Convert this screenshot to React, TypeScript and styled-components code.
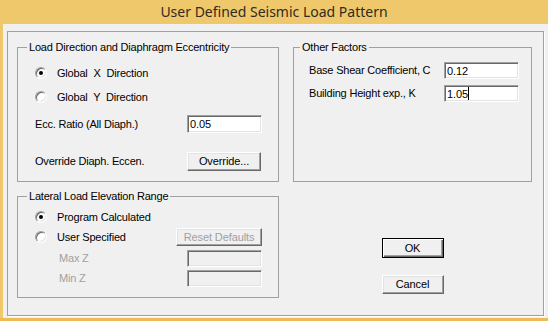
import React from "react";
import styled, { createGlobalStyle } from "styled-components";

const Global = createGlobalStyle`
  html, body { margin: 0; padding: 0; background: #f0f0f0; }
  body { font-family: "Liberation Sans", Arial, sans-serif; }
`;

const Window = styled.div`
  width: 548px;
  height: 321px;
  box-sizing: border-box;
  background: #efc86b;
  display: flex;
  flex-direction: column;
  border-bottom: 3px solid #ecbd55;
`;

const TitleBar = styled.div`
  height: 24px;
  flex: none;
  display: flex;
  align-items: center;
  justify-content: center;
  font-family: "Segoe UI", "Noto Sans", "Open Sans", sans-serif;
  font-size: 14px;
  color: #2f2b22;
  padding-bottom: 1px;
  box-sizing: border-box;
`;

const ClientWrap = styled.div`
  flex: 1;
  display: flex;
  padding-left: 3px;
  min-height: 0;
`;

const Client = styled.div`
  flex: 1;
  background: #f0f0f0;
  border-left: 1px solid #fbf1dc;
  padding: 7px 4px 2px 3px;
  display: flex;
  flex-direction: column;
`;

const Frame = styled.div`
  flex: 1;
  border: 1px solid #a0a0a0;
  box-shadow: 1px 1px 0 #ffffff;
  padding: 9px 11px 0 9px;
  display: grid;
  grid-template-columns: 262px 239px;
  grid-template-rows: 141px 108px;
  column-gap: 14px;
  row-gap: 8px;
  align-content: start;
`;

const Group = styled.fieldset`
  margin: 0;
  min-width: 0;
  box-sizing: border-box;
  border: 1px solid #a0a0a0;
  padding: 0;
  display: flex;
  flex-direction: column;
`;

const GroupBody = styled.div<{ $padTop: number; $padLeft: number }>`
  display: flex;
  flex-direction: column;
  padding: ${(p) => p.$padTop}px 0 0 ${(p) => p.$padLeft}px;
`;

const Legend = styled.legend<{ $x: number }>`
  font-size: 11px;
  line-height: 13px;
  letter-spacing: -0.2px;
  color: #000;
  padding: 0 2px;
  margin-left: ${(p) => p.$x}px;
`;

const Row = styled.div<{ $h: number; $mt?: number; $cols: string }>`
  display: grid;
  grid-template-columns: ${(p) => p.$cols};
  align-items: center;
  height: ${(p) => p.$h}px;
  margin-top: ${(p) => p.$mt ?? 0}px;
`;

const Label = styled.span<{ $disabled?: boolean; $indent?: number; $ws?: number }>`
  font-size: 11px;
  letter-spacing: -0.2px;
  word-spacing: ${(p) => p.$ws ?? 0}px;
  color: ${(p) => (p.$disabled ? "#a0a0a0" : "#000")};
  padding-left: ${(p) => p.$indent ?? 0}px;
  white-space: nowrap;
  line-height: 13px;
`;

const RadioWrap = styled.label`
  display: flex;
  align-items: center;
  gap: 10px;
`;

const RadioCircle = styled.span<{ $checked?: boolean }>`
  width: 12px;
  height: 12px;
  box-sizing: border-box;
  border-radius: 50%;
  background: #fff;
  border: 1px solid;
  border-color: #a0a0a0 #ffffff #ffffff #a0a0a0;
  box-shadow: inset 1px 1px 0 #696969, inset -1px -1px 0 #e3e3e3;
  display: flex;
  align-items: center;
  justify-content: center;
  flex: none;
  &::after {
    content: "";
    width: 4px;
    height: 4px;
    border-radius: 50%;
    background: #000;
    display: ${(p) => (p.$checked ? "block" : "none")};
  }
`;

const Field = styled.div<{ $disabled?: boolean; $h: number }>`
  width: 75px;
  height: ${(p) => p.$h}px;
  box-sizing: border-box;
  background: ${(p) => (p.$disabled ? "#f0f0f0" : "#ffffff")};
  border: 1px solid;
  border-color: #a0a0a0 #ffffff #ffffff #a0a0a0;
  box-shadow: inset 1px 1px 0 #696969, inset -1px -1px 0 #e3e3e3;
  padding-left: 2px;
  display: flex;
  align-items: center;
  font-size: 11px;
  letter-spacing: -0.1px;
  color: #000;
`;

const Caret = styled.span`
  width: 1px;
  height: 13px;
  background: #000;
`;

const Button = styled.div<{ $w: number; $h: number; $default?: boolean; $disabled?: boolean; $mt?: number }>`
  width: ${(p) => p.$w}px;
  height: ${(p) => p.$h}px;
  margin-top: ${(p) => p.$mt ?? 0}px;
  box-sizing: border-box;
  background: #f0f0f0;
  border: 1px solid;
  border-color: ${(p) => (p.$default ? "#000000" : "#ffffff #696969 #696969 #ffffff")};
  box-shadow: ${(p) =>
    p.$default
      ? "inset 1px 1px 0 #ffffff, inset -1px -1px 0 #696969, inset -2px -2px 0 #a0a0a0"
      : "inset -1px -1px 0 #a0a0a0, inset 1px 1px 0 #e3e3e3"};
  display: flex;
  align-items: center;
  justify-content: center;
  font-size: 11px;
  letter-spacing: -0.1px;
  color: ${(p) => (p.$disabled ? "#a0a0a0" : "#000")};
  padding-bottom: 1px;
`;

const ButtonColumn = styled.div`
  display: flex;
  flex-direction: column;
  align-items: center;
  padding-top: 48px;
`;

const Radio = ({ checked, children, ws }: { checked?: boolean; children: React.ReactNode; ws?: number }) => (
  <RadioWrap>
    <RadioCircle $checked={checked} />
    <Label $ws={ws}>{children}</Label>
  </RadioWrap>
);

export default function App() {
  return (
    <>
      <Global />
      <Window>
        <TitleBar>User Defined Seismic Load Pattern</TitleBar>
        <ClientWrap>
          <Client>
            <Frame>
              <Group>
                <Legend $x={9}>Load Direction and Diaphragm Eccentricity</Legend>
                <GroupBody $padTop={7} $padLeft={17}>
                  <Row $h={24} $cols="1fr">
                    <Radio checked ws={3}>Global X Direction</Radio>
                  </Row>
                  <Row $h={24} $cols="1fr">
                    <Radio ws={3}>Global Y Direction</Radio>
                  </Row>
                  <Row $h={18} $mt={6} $cols="152px 75px">
                    <Label>Ecc. Ratio (All Diaph.)</Label>
                    <Field $h={18}>0.05</Field>
                  </Row>
                  <Row $h={19} $mt={19} $cols="152px 74px">
                    <Label>Override Diaph. Eccen.</Label>
                    <Button $w={74} $h={19}>Override...</Button>
                  </Row>
                </GroupBody>
              </Group>

              <Group>
                <Legend $x={6}>Other Factors</Legend>
                <GroupBody $padTop={8} $padLeft={15}>
                  <Row $h={17} $cols="135px 75px">
                    <Label>Base Shear Coefficient, C</Label>
                    <Field $h={17}>0.12</Field>
                  </Row>
                  <Row $h={17} $mt={6} $cols="135px 75px">
                    <Label>Building Height exp., K</Label>
                    <Field $h={17}>
                      1.05
                      <Caret />
                    </Field>
                  </Row>
                </GroupBody>
              </Group>

              <Group>
                <Legend $x={9}>Lateral Load Elevation Range</Legend>
                <GroupBody $padTop={4} $padLeft={17}>
                  <Row $h={20} $cols="1fr">
                    <Radio checked>Program Calculated</Radio>
                  </Row>
                  <Row $h={18} $mt={1} $cols="141px 86px">
                    <Radio>User Specified</Radio>
                    <Button $w={86} $h={18} $disabled>Reset Defaults</Button>
                  </Row>
                  <Row $h={17} $mt={4} $cols="152px 75px">
                    <Label $disabled $indent={24}>Max Z</Label>
                    <Field $h={17} $disabled />
                  </Row>
                  <Row $h={17} $mt={3} $cols="152px 75px">
                    <Label $disabled $indent={24}>Min Z</Label>
                    <Field $h={17} $disabled />
                  </Row>
                </GroupBody>
              </Group>

              <ButtonColumn>
                <Button $w={62} $h={20} $default>OK</Button>
                <Button $w={62} $h={19} $mt={17}>Cancel</Button>
              </ButtonColumn>
            </Frame>
          </Client>
        </ClientWrap>
      </Window>
    </>
  );
}
